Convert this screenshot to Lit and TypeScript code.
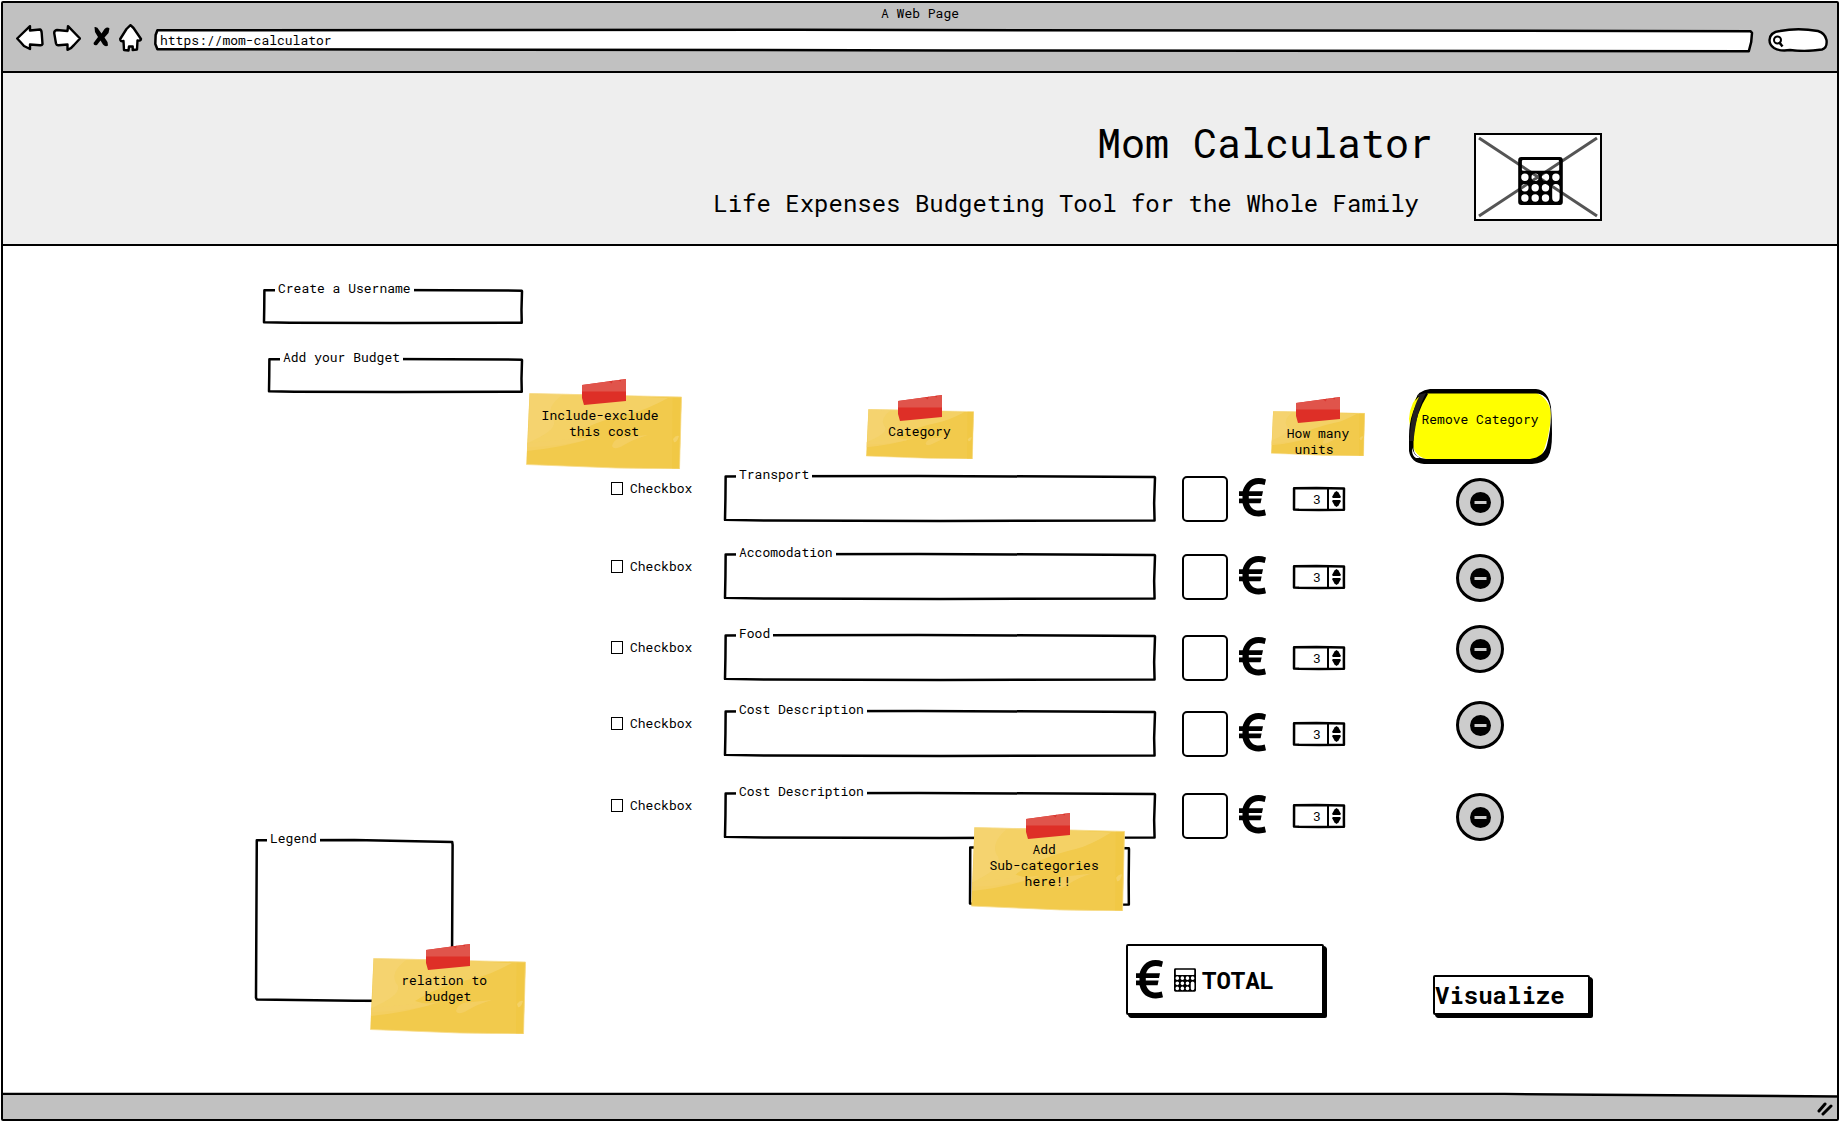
import { LitElement, html, svg, css } from "lit";
import { customElement, property } from "lit/decorators.js";

const FONT = css`
  :host {
    font-family: "Roboto Mono", "DejaVu Sans Mono", "Liberation Mono", monospace;
    font-size: 13px;
    line-height: 16px;
    color: #000;
  }
  * {
    box-sizing: border-box;
  }
  svg {
    display: block;
  }
`;

/* Hand-drawn outline stretched over its parent. */
const OUTLINE_STYLES = css`
  .outline {
    position: absolute;
    inset: 0;
    width: 100%;
    height: 100%;
    overflow: visible;
    pointer-events: none;
  }
  .outline path {
    fill: none;
    stroke: #000;
    stroke-width: 2.5;
    stroke-linejoin: round;
    vector-effect: non-scaling-stroke;
  }
`;

const WOBBLE = "M0.15 1 L45 0 L99.9 2 L100 4 L99.8 60 L99.9 99 L50 100 L10 99 L0 97.5 L0.1 50 Z";
const TALL_WOBBLE = "M0.4 0.2 L50 0 L99.6 1.2 L99.8 3 L99.4 100 L50 99.8 L0.4 99 L0 98 Z";

const outline = (d = WOBBLE) => html`
  <svg class="outline" viewBox="0 0 100 100" preserveAspectRatio="none" aria-hidden="true">
    <path d=${d}></path>
  </svg>
`;

const hole = (x: number, y: number, r = 3.7) =>
  `M${x - r} ${y}a${r} ${r} 0 1 0 ${2 * r} 0a${r} ${r} 0 1 0 ${-2 * r} 0Z`;

const KEYPAD = [20.3, 30.7, 41]
  .map((y, row) =>
    [6.7, 17, 27.3, 37.7]
      .filter((_, col) => col < 3 || row === 0)
      .map((x) => hole(x, y))
      .join("")
  )
  .join("");

const calculatorIcon = (cls: string) => html`
  <svg class=${cls} viewBox="0 0 44.6 48" aria-hidden="true">
    <path
      fill-rule="evenodd"
      d="M3 0H41.6Q44.6 0 44.6 3V45Q44.6 48 41.6 48H3Q0 48 0 45V3Q0 0 3 0Z
         M5 3Q3.7 3 3.7 4.3V12.4Q3.7 13.7 5 13.7H39.7Q41 13.7 41 12.4V4.3Q41 3 39.7 3Z
         M34 30.7V41A3.7 3.7 0 0 0 41.4 41V30.7A3.7 3.7 0 0 0 34 30.7Z ${KEYPAD}"
    ></path>
  </svg>
`;

const euroIcon = html`
  <svg class="euro" width="28" height="39" viewBox="0 0 28 39" aria-hidden="true">
    <path
      d="M27 1.4C20 -1 12.5 -.3 8 5C5.5 8 4 11 3.5 14V25C5.5 34.5 12 38.6 20 38.4C22.5 38.4 25 38 27 37.3L25.7 31.6C18 34 11.5 32 9.8 24V15C11 8 16 4 25.7 7Z"
    ></path>
    <path d="M0 13.2H24L23 18H0Z M0 20.4H22.6L21.6 25.2H0Z"></path>
  </svg>
`;

@customElement("sticky-note")
class StickyNote extends LitElement {
  @property({ attribute: false }) lines: string[] = [];

  static styles = [
    FONT,
    css`
      :host {
        display: block;
        position: relative;
        padding-top: 28px;
        text-align: center;
      }
      .paper {
        position: absolute;
        top: 14px;
        left: 0;
        width: 100%;
        height: calc(100% - 14px);
      }
      .tape {
        position: absolute;
        top: 0;
        left: calc(50% - 22px);
      }
      .text {
        position: relative;
        margin: 0;
        white-space: pre;
      }
    `,
  ];

  render() {
    return html`
      <svg class="paper" viewBox="0 0 156 76" preserveAspectRatio="none" aria-hidden="true">
        <path fill="#f2ca4c" d="M3.5 0.5L155.500 4L153.500 76L90 75L0.300 71.500Z"></path>
        <path fill="#f5d576" d="M3.500 0.500L52 1L142 5Q120 17 106 20Q68 28 45 43L60 47Q30 54 1.500 54Z" opacity=".6"></path>
        <path fill="#f5d57a" d="M4 1L36 2Q20 14 26 25Q34 33 14 44L2 50Z" opacity=".5"></path>
        <path fill="#f4d067" d="M86 53Q88 44 102 44L122 42Q108 46 98 52Q88 58 86 53Z M1 50L70 44Q40 54 1 58Z" opacity=".8"></path>
        <path fill="#f1c845" d="M146.500 4H155.500L153.500 76H146Z"></path>
        <path fill="#f4d166" d="M147 46Q150 42 153 43Q151 50 148 49Z"></path>
        <path fill="none" stroke="#f7dc8c" stroke-width=".8" d="M3.5 0.500L155.500 4L153.500 76L90 75L0.300 71.500"></path>
      </svg>
      <svg class="tape" width="44" height="26" viewBox="0 0 44 26" aria-hidden="true">
        <path fill="#de2f27" d="M0 6L44 0V22L2 26L0 19Z"></path>
        <path fill="#e0544b" d="M0 6L44 0V12.500H0Z"></path>
        <path fill="#d9372f" d="M27 2.300L31 1.800L29.500 4.500Z M36 1.200L39.500 .700L38.500 2.500Z"></path>
      </svg>
      <p class="text">${this.lines.join("\n")}</p>
    `;
  }
}

@customElement("sketch-field")
class SketchField extends LitElement {
  @property() label = "";

  static styles = [
    FONT,
    OUTLINE_STYLES,
    css`
      :host {
        display: block;
        position: relative;
      }
      .label {
        position: absolute;
        z-index: 1;
        top: -10px;
        left: 11px;
        padding: 0 3px;
        background: #fff;
        white-space: nowrap;
      }
      .input {
        display: block;
        width: 100%;
        height: 100%;
        padding: 4px 12px;
        border: 0;
        background: none;
        font: inherit;
        outline: none;
      }
    `,
  ];

  render() {
    return html`
      ${outline()}
      <label class="label" for="value">${this.label}</label>
      <input class="input" id="value" type="text" />
    `;
  }
}

@customElement("cost-row")
class CostRow extends LitElement {
  @property() label = "";

  static styles = [
    FONT,
    OUTLINE_STYLES,
    css`
      :host {
        display: flex;
        align-items: flex-start;
        height: 45px;
      }
      .include {
        display: flex;
        align-items: center;
        gap: 7px;
        flex: 0 0 199px;
        padding: 4px 0 0 85px;
      }
      .check {
        appearance: none;
        width: 12px;
        height: 13px;
        margin: 0;
        border: 1px solid #000;
        background: #fff;
      }
      .check:checked {
        background: #000;
      }
      .field {
        flex: 1;
        height: 45px;
      }
      .amount {
        width: 46px;
        height: 46px;
        margin: 0 11px 0 27px;
        padding: 4px;
        border: 2px solid #000;
        border-radius: 5px;
        font: inherit;
        text-align: center;
      }
      .euro {
        margin-top: 2px;
      }
      .stepper {
        position: relative;
        display: flex;
        align-self: center;
        width: 50px;
        height: 22px;
        margin: 0 21px 0 27px;
      }
      .units {
        width: 35px;
        min-width: 0;
        padding: 0 6px 0 0;
        border: 0;
        border-right: 2px solid #000;
        background: none;
        font: inherit;
        text-align: right;
        appearance: textfield;
        outline: none;
      }
      .units::-webkit-inner-spin-button {
        appearance: none;
        margin: 0;
      }
      .arrows {
        display: flex;
        flex: 1;
        flex-direction: column;
        align-items: center;
        justify-content: center;
        gap: 2px;
      }
      .arrow {
        padding: 0;
        border: 0;
        background: none;
      }
    `,
  ];

  private step(delta: number) {
    const units = this.renderRoot.querySelector<HTMLInputElement>(".units");
    if (units) units.value = String(Math.max(0, Number(units.value) + delta));
  }

  render() {
    return html`
      <label class="include"><input class="check" type="checkbox" />Checkbox</label>
      <sketch-field class="field" .label=${this.label}></sketch-field>
      <input class="amount" type="text" aria-label="Amount in euro" />
      ${euroIcon}
      <div class="stepper">
        ${outline()}
        <input class="units" type="number" value="3" aria-label="Units" />
        <div class="arrows">
          <button class="arrow" aria-label="More units" @click=${() => this.step(1)}>
            <svg width="9" height="7" viewBox="0 0 9 7"><path d="M4.500 0L6.500 1.500L9 6L8 7H1L0 6L2.500 1.500Z"></path></svg>
          </button>
          <button class="arrow" aria-label="Fewer units" @click=${() => this.step(-1)}>
            <svg width="9" height="7" viewBox="0 0 9 7"><path d="M4.500 7L6.500 5.500L9 1L8 0H1L0 1L2.500 5.500Z"></path></svg>
          </button>
        </div>
      </div>
    `;
  }
}

@customElement("browser-chrome")
class BrowserChrome extends LitElement {
  static styles = [
    FONT,
    OUTLINE_STYLES,
    css`
      :host {
        display: block;
        padding-top: 2px;
        border-bottom: 2px solid #000;
        background: #c1c1c1;
      }
      .title {
        margin: 0;
        text-align: center;
      }
      .bar {
        display: flex;
        align-items: center;
        height: 50px;
        padding: 0 9px 12px 13px;
      }
      .nav {
        display: flex;
        align-items: center;
        gap: 9px;
        padding-bottom: 5px;
      }
      .nav-button {
        padding: 0;
        border: 0;
        background: none;
      }
      .shape {
        fill: #fff;
        stroke: #000;
        stroke-width: 2.4;
        stroke-linejoin: round;
      }
      .address {
        position: relative;
        flex: 1;
        height: 20px;
        margin: 0 16px 0 12px;
      }
      .address .outline path {
        fill: #fff;
      }
      .url {
        position: relative;
        display: block;
        width: 100%;
        height: 100%;
        padding: 0 5px;
        border: 0;
        background: none;
        font: inherit;
        outline: none;
      }
      .search {
        position: relative;
        width: 60px;
        height: 24px;
      }
      .search-art {
        position: absolute;
        inset: 0;
      }
      .query {
        position: relative;
        width: 100%;
        height: 100%;
        padding: 0 8px 0 18px;
        border: 0;
        background: none;
        font: inherit;
        outline: none;
      }
    `,
  ];

  render() {
    return html`
      <p class="title">A Web Page</p>
      <div class="bar">
        <nav class="nav">
          <button class="nav-button" aria-label="Back">
            <svg width="28" height="26" viewBox="0 0 28 26">
              <path class="shape" d="M1.200 13.500L14 1.200V5.500L24 4.500Q25.500 5 25.700 8L26.500 19Q26 20.500 24 20.200L14 19.500V24L8 21Q5 17.500 1.200 13.500Z"></path>
            </svg>
          </button>
          <button class="nav-button" aria-label="Forward">
            <svg width="28" height="26" viewBox="0 0 28 26">
              <path class="shape" d="M27 13.500L15 1.200L14.500 6L4 5Q1.200 5.500 1.200 8L3 18.500Q3.500 20.500 5.500 20.200L14.500 19.500V24.800Q19 23 21 20Z"></path>
            </svg>
          </button>
          <button class="nav-button" aria-label="Stop">
            <svg width="20" height="26" viewBox="0 0 20 26">
              <path d="M4.500 2Q7.500 1.500 9 5L11.500 8.500L14.500 4Q17.500 1.500 19.500 3.500L18.500 8L14.500 12.500L17.500 17L18 20.500Q15.500 22.500 13 19.500L10.500 15.500L7 20Q3.500 21 3.500 18L8 12L5 7Z"></path>
            </svg>
          </button>
          <button class="nav-button" aria-label="Home">
            <svg width="24" height="28" viewBox="0 0 24 28">
              <path class="shape" d="M11.500 1.200L14.500 4L22 15Q22 17 18.500 16.500L18 25.500L13.700 26V22.500H10L9.500 26.500L5 26L4.500 17Q1.200 18 1.200 15L7.500 5Z"></path>
            </svg>
          </button>
        </nav>
        <div class="address">
          ${outline("M0.150 1 L40 -1 L99.900 6 L100 14 L99.950 60 L99.800 106 L50 102 L0.150 96 L0.020 70 L0.040 25 Z")}
          <input class="url" type="text" aria-label="Address" value="https://mom-calculator" />
        </div>
        <div class="search">
          <svg class="search-art" width="60" height="24" viewBox="0 0 60 24" aria-hidden="true">
            <path class="shape" d="M1.500 12Q2 4 12 3Q30 -.500 50 3Q57 5 58.500 12Q59.500 20 54 21.500Q38 24 22 22Q12 23.500 6 20Q1.500 17 1.500 12Z"></path>
            <circle cx="9.500" cy="12" r="3.500" fill="none" stroke="#000" stroke-width="2"></circle>
            <path d="M11 14L14.500 18.500" stroke="#000" stroke-width="2.500"></path>
          </svg>
          <input class="query" type="text" aria-label="Search" />
        </div>
      </div>
    `;
  }
}

@customElement("app-root")
class AppRoot extends LitElement {
  private costs = ["Transport", "Accomodation", "Food", "Cost Description", "Cost Description"];

  static styles = [
    FONT,
    OUTLINE_STYLES,
    css`
      :host {
        display: block;
        padding: 1px;
        background: #fff;
      }
      .window {
        display: flex;
        flex-direction: column;
        min-height: calc(100vh - 2px);
        border: 2px solid #000;
        border-radius: 2px;
      }
      .banner {
        display: flex;
        align-items: flex-end;
        justify-content: flex-end;
        gap: 41px;
        height: 173px;
        padding: 0 235px 23px 16px;
        border-bottom: 2px solid #000;
        background: #eee;
      }
      .heading {
        text-align: right;
      }
      .name {
        margin: 0;
        font-size: 40px;
        font-weight: 400;
        line-height: 60px;
      }
      .tagline {
        margin: 0;
        padding: 12px 14px 0 0;
        font-size: 24px;
        line-height: 36px;
      }
      .logo {
        position: relative;
        display: grid;
        place-items: center;
        width: 128px;
        height: 88px;
        padding: 8px 0 0 4px;
        border: 2px solid #000;
        background: #fff;
      }
      .cross {
        position: absolute;
        inset: 0;
      }
      .logo-icon {
        position: relative;
        width: 45px;
        height: 48px;
      }
      .main {
        display: flex;
        flex: 1;
        padding: 0 235px 62px 253px;
      }
      .side {
        display: flex;
        flex: 0 0 270px;
        flex-direction: column;
        justify-content: space-between;
        padding-top: 44px;
      }
      .account {
        display: flex;
        flex-direction: column;
        align-items: flex-end;
        gap: 36px;
        padding-right: 4px;
      }
      .username {
        width: 258px;
        height: 33px;
      }
      .budget {
        width: 253px;
        height: 33px;
      }
      .legend {
        position: relative;
        width: 197px;
        height: 161px;
        margin-bottom: 33px;
      }
      .legend-title {
        position: absolute;
        z-index: 1;
        top: -10px;
        left: 11px;
        margin: 0;
        padding: 0 3px;
        background: #fff;
        font-size: 13px;
        font-weight: 400;
      }
      .legend-note {
        position: absolute;
        top: 104px;
        left: 114px;
        width: 156px;
        height: 90px;
      }
      .content {
        display: flex;
        flex: 1;
        flex-direction: column;
        justify-content: space-between;
      }
      .budget-table {
        display: flex;
        gap: 43px;
        padding: 133px 50px 0 0;
      }
      .costs {
        flex: 1;
      }
      .notes {
        display: grid;
        grid-template-columns: 199px 1fr 209px;
        height: 97px;
      }
      .include-note {
        width: 156px;
        height: 90px;
      }
      .category-note {
        justify-self: center;
        width: 108px;
        height: 64px;
        margin: 16px 42px 0 0;
      }
      .units-note {
        justify-self: end;
        width: 94px;
        height: 59px;
        margin-top: 18px;
      }
      .rows {
        display: grid;
        grid-template-rows: 78px 81px 76px 82px 45px;
      }
      .subcategories {
        position: relative;
        width: 159px;
        height: 58px;
        margin: 9px 0 0 444px;
      }
      .sub-note {
        position: absolute;
        top: -34px;
        left: 1px;
        width: 154px;
        height: 98px;
      }
      .removal {
        flex: 0 0 144px;
        padding-top: 10px;
      }
      .remove-title {
        position: relative;
        height: 75px;
        margin: 0 0 14px;
        padding-top: 22px;
        text-align: center;
        font-size: 13px;
        font-weight: 400;
      }
      .marker {
        position: absolute;
        inset: 0;
      }
      .remove-label {
        position: relative;
      }
      .remove-list {
        display: grid;
        grid-template-rows: 76px 71px 76px 92px 48px;
        justify-items: center;
        margin: 0;
        padding: 0;
        list-style: none;
      }
      .remove {
        display: grid;
        place-items: center;
        width: 48px;
        height: 48px;
        padding: 0;
        border: 3px solid #000;
        border-radius: 50%;
        background: #ccc;
      }
      .actions {
        display: flex;
        align-items: flex-end;
        justify-content: flex-end;
        gap: 109px;
        padding: 0 12px 19px 0;
      }
      .action {
        position: relative;
        display: flex;
        align-items: center;
        border: 2px solid #000;
        border-radius: 2px;
        background: #fff;
        box-shadow: 2px 2px 0 #000, 3px 3px 0 #000;
        color: #000;
        font-family: inherit;
        font-size: 24px;
        font-weight: 700;
        line-height: 32px;
      }
      .total {
        width: 198px;
        height: 71px;
        padding: 0 8px;
      }
      .total-icon {
        width: 22px;
        height: 24px;
        margin: 0 6px 0 10px;
      }
      .visualize {
        width: 157px;
        height: 40px;
        padding: 0;
      }
      .status {
        position: relative;
        display: flex;
        align-items: center;
        justify-content: flex-end;
        height: 23px;
        padding: 2px 4px 0 0;
        background: #c1c1c1;
      }
      .status-line {
        position: absolute;
        top: -4px;
        left: 0;
        width: 100%;
        height: 6px;
      }
      .grip {
        position: relative;
      }
    `,
  ];

  render() {
    return html`
      <div class="window">
        <browser-chrome></browser-chrome>
        <header class="banner">
          <div class="heading">
            <h1 class="name">Mom Calculator</h1>
            <p class="tagline">Life Expenses Budgeting Tool for the Whole Family</p>
          </div>
          <div class="logo">
            <svg class="cross" width="124" height="84" viewBox="0 0 124 84" aria-hidden="true">
              <path d="M3 3L121 81M121 3L3 81" stroke="#555" stroke-width="3"></path>
            </svg>
            ${calculatorIcon("logo-icon")}
          </div>
        </header>
        <main class="main">
          <aside class="side">
            <form class="account">
              <sketch-field class="username" label="Create a Username"></sketch-field>
              <sketch-field class="budget" label="Add your Budget"></sketch-field>
            </form>
            <section class="legend">
              ${outline(TALL_WOBBLE)}
              <h2 class="legend-title">Legend</h2>
              <sticky-note class="legend-note" .lines=${["relation to ", "budget"]}></sticky-note>
            </section>
          </aside>
          <div class="content">
            <div class="budget-table">
              <section class="costs">
                <div class="notes">
                  <sticky-note class="include-note" .lines=${["Include-exclude ", "this cost"]}></sticky-note>
                  <sticky-note class="category-note" .lines=${["Category"]}></sticky-note>
                  <sticky-note class="units-note" .lines=${["How many", "units "]}></sticky-note>
                </div>
                <div class="rows">
                  ${this.costs.map((label) => html`<cost-row .label=${label}></cost-row>`)}
                </div>
                <div class="subcategories">
                  ${outline()}
                  <sticky-note class="sub-note" .lines=${["Add ", "Sub-categories ", "here!!"]}></sticky-note>
                </div>
              </section>
              <section class="removal">
                <h2 class="remove-title">
                  <svg class="marker" width="144" height="75" viewBox="0 0 144 75" aria-hidden="true">
                    <path fill="#ff0" d="M14 3H126Q141 8 143 24Q142 50 132 70H18Q4 66 4 50L1 30Q2 12 14 3Z"></path>
                    <path d="M7 12Q10 1 22 0H128Q140 1 143 18Q144 30 144 45Q144 62 140 68Q136 74 124 75H16Q3 74 1 62V48Q1 20 17 4L20 5Q8 24 5.500 46V60Q6 69 18 70H122Q136 68 139 56Q144 36 142.500 20Q140 5 128 4.500H20Q12 5 7 12Z"></path>
                    <path fill="#231f20" d="M9 6L18 4Q9 20 5.500 52H1.500Q3 22 11 8Z"></path>
                    <path fill="#fff" d="M131 5Q139 7 141 16Q137 8 131 5Z M4.500 59Q5 66 12 69H8Q3 66 4.500 59Z"></path>
                  </svg>
                  <span class="remove-label">Remove Category</span>
                </h2>
                <ul class="remove-list">
                  ${this.costs.map(
                    (label) => html`
                      <li>
                        <button class="remove" aria-label="Remove ${label}">
                          <svg width="21" height="21" viewBox="0 0 21 21" aria-hidden="true">
                            <circle cx="10.500" cy="10.500" r="10.500"></circle>
                            ${svg`<rect x="4.500" y="9" width="12" height="3" fill="#ccc"></rect>`}
                          </svg>
                        </button>
                      </li>
                    `
                  )}
                </ul>
              </section>
            </div>
            <div class="actions">
              <button class="action total">${euroIcon}${calculatorIcon("total-icon")}TOTAL</button>
              <button class="action visualize">Visualize</button>
            </div>
          </div>
        </main>
        <footer class="status">
          <svg class="status-line" viewBox="0 0 1832 6" preserveAspectRatio="none" aria-hidden="true">
            <path fill="#fff" d="M1400 0H1832V5.500Z"></path>
            <path fill="none" stroke="#000" stroke-width="2.500" d="M0 2H1500L1832 4.500"></path>
          </svg>
          <svg class="grip" width="16" height="14" viewBox="0 0 16 14" aria-hidden="true">
            <path d="M2 9L8 2M6 12L14 4" stroke="#000" stroke-width="3" stroke-linecap="round"></path>
          </svg>
        </footer>
      </div>
    `;
  }
}
